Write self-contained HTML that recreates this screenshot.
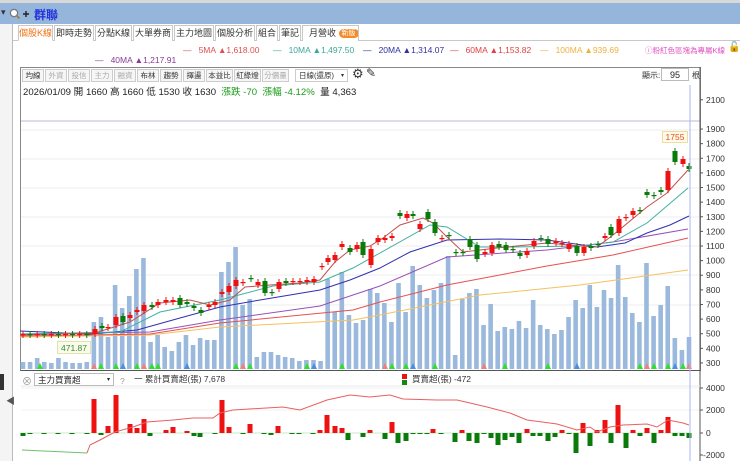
<!DOCTYPE html>
<html><head><meta charset="utf-8">
<style>
*{margin:0;padding:0;box-sizing:border-box}
body{width:740px;height:461px;overflow:hidden;background:#fff;font-family:"Liberation Sans","Noto Sans CJK TC",sans-serif;position:relative;color:#222}
.a{position:absolute;white-space:nowrap}
.tab{position:absolute;top:25px;height:16px;font-size:9px;line-height:15px;border:1px solid #c8c8c8;border-bottom:none;background:#fff;text-align:center;color:#333;white-space:nowrap;overflow:hidden}
.tb{position:absolute;top:69px;height:13px;font-size:7.5px;line-height:12px;border:1px solid #ccc;background:#f6f6f6;text-align:center;color:#333;white-space:nowrap;overflow:hidden}
.tb.d{color:#aaa}
</style></head><body>
<div class="a" style="left:0;top:0;width:740px;height:3px;background:#d8d8d8"></div>
<div class="a" style="left:0;top:3px;width:740px;height:21px;background:#95b5da"></div>
<div class="a" style="left:1px;top:7px;font-size:9px;color:#333">▾</div>
<svg class="a" style="left:9px;top:8px" width="22" height="12"><circle cx="5" cy="5" r="3.6" fill="#fff" stroke="#777" stroke-width="1.2"/><line x1="7.5" y1="7.5" x2="10.5" y2="10.5" stroke="#a08040" stroke-width="1.8"/><path d="M14 6h6M17 3v6" stroke="#222" stroke-width="1.4"/></svg>
<div class="a" style="left:34px;top:6px;font-size:12px;font-weight:bold;color:#2233dd">群聯</div>
<div class="a" style="left:0;top:24px;width:13px;height:437px;background:#f4f4f4;border-right:1px solid #bbb"></div>
<div class="a" style="left:0;top:374px;width:4px;height:16px;background:#333"></div>
<div class="a" style="left:6px;top:394px;font-size:9px;color:#555">◀</div>
<div class="a" style="left:13px;top:40px;width:727px;height:1px;background:#c8c8c8"></div>
<div class="tab" style="left:18px;width:35px;color:#f07010;border-bottom:1px solid #fff">個股K線</div>
<div class="tab" style="left:54px;width:40px">即時走勢</div>
<div class="tab" style="left:95px;width:37px">分點K線</div>
<div class="tab" style="left:133px;width:40px">大單券商</div>
<div class="tab" style="left:174px;width:40px">主力地圖</div>
<div class="tab" style="left:215px;width:40px">個股分析</div>
<div class="tab" style="left:256px;width:22px">組合</div>
<div class="tab" style="left:279px;width:22px">筆記</div>
<div class="tab" style="left:302px;width:57px;text-align:left;padding-left:6px">月營收 <span style="display:inline-block;background:#f58a2a;color:#fff;border-radius:6px;font-size:7px;line-height:9px;padding:0 3px;vertical-align:1px">新版</span></div>
<div class="a" style="left:183px;top:45px;font-size:8.5px;color:#e05050">—&nbsp;&nbsp; 5MA ▲1,618.00</div>
<div class="a" style="left:273px;top:45px;font-size:8.5px;color:#3aa89a">—&nbsp;&nbsp; 10MA ▲1,497.50</div>
<div class="a" style="left:363px;top:45px;font-size:8.5px;color:#3030a0">—&nbsp;&nbsp; 20MA ▲1,314.07</div>
<div class="a" style="left:450px;top:45px;font-size:8.5px;color:#e04040">—&nbsp;&nbsp; 60MA ▲1,153.82</div>
<div class="a" style="left:540px;top:45px;font-size:8.5px;color:#f0b040">—&nbsp;&nbsp; 100MA ▲939.69</div>
<div class="a" style="left:645px;top:45px;font-size:7.5px;color:#e050c0">ⓘ粉紅色區塊為專屬K線</div>
<div class="a" style="left:728px;top:42px;font-size:10px;color:#111">🔓</div>
<div class="a" style="left:95px;top:55px;font-size:8.5px;color:#8a3a9a">—&nbsp;&nbsp; 40MA ▲1,217.91</div>
<div class="a" style="left:20px;top:67px;width:681px;height:304px;border:1px solid #888;border-bottom:1px solid #555"></div>
<div class="tb" style="left:22px;width:22px">均線</div>
<div class="tb d" style="left:45px;width:22px">外資</div>
<div class="tb d" style="left:68px;width:22px">投信</div>
<div class="tb d" style="left:91px;width:22px">主力</div>
<div class="tb d" style="left:114px;width:22px">融資</div>
<div class="tb" style="left:137px;width:22px">布林</div>
<div class="tb" style="left:160px;width:22px">趨勢</div>
<div class="tb" style="left:183px;width:22px">擇盪</div>
<div class="tb" style="left:206px;width:27px">本益比</div>
<div class="tb" style="left:234px;width:27px">紅綠燈</div>
<div class="tb d" style="left:262px;width:27px">分價量</div>
<div class="tb" style="left:295px;width:53px;background:#fff;text-align:left;padding-left:3px">日線(還原)<span style="float:right;margin-right:3px;font-size:6px">▾</span></div>
<div class="a" style="left:352px;top:66px;font-size:13px;color:#333">⚙</div>
<div class="a" style="left:366px;top:66px;font-size:12px;color:#333">✎</div>
<div class="a" style="left:642px;top:70px;font-size:8px;color:#333">顯示:</div>
<div class="a" style="left:661px;top:68px;width:28px;height:13px;border:1px solid #bbb;font-size:9px;text-align:center;line-height:12px">95</div>
<div class="a" style="left:692px;top:70px;font-size:8px;color:#333">根</div>
<div class="a" style="left:23px;top:84px;font-size:9.6px;color:#222">2026/01/09 開 1660 高 1660 低 1530 收 1630 &nbsp;<span style="color:#1a9a1a">漲跌 -70 &nbsp;漲幅 -4.12%</span> &nbsp;量 4,363</div>
<svg class="a" style="left:0;top:0" width="740" height="461" id="s"></svg>
<div class="a" style="left:662px;top:131px;width:26px;height:12px;background:#fffbe8;border:1px solid #eedca0;font-size:8.5px;color:#e05020;text-align:center;line-height:11px">1755</div>
<div class="a" style="left:57px;top:341px;width:34px;height:13px;background:#fafbe8;border:1px solid #dde4b0;font-size:8.5px;color:#3a8a3a;text-align:center;line-height:12px">471.87</div>
<div class="a" style="left:22px;top:373px;font-size:10px;color:#999">⊗</div>
<div class="a" style="left:34px;top:373px;width:80px;height:13px;border:1px solid #bbb;background:#fff;font-size:8.5px;line-height:12px;padding-left:3px">主力買賣超<span style="float:right;margin-right:3px;font-size:6px">▾</span></div>
<div class="a" style="left:120px;top:376px;font-size:8.5px;color:#999">?</div>
<div class="a" style="left:134px;top:373px;font-size:8.5px;color:#333">一 累計買賣超(張) 7,678</div>
<div class="a" style="left:402px;top:374px;width:5px;height:5px;background:#e11"></div>
<div class="a" style="left:402px;top:380px;width:5px;height:5px;background:#181"></div>
<div class="a" style="left:412px;top:373px;font-size:8.5px;color:#333">買賣超(張) -472</div>
<script>
var s=document.getElementById('s'),h='';
function L(x1,y1,x2,y2,c,w){h+='<line x1="'+x1+'" y1="'+y1+'" x2="'+x2+'" y2="'+y2+'" stroke="'+c+'" stroke-width="'+(w||1)+'"/>';}
function R(x,y,w,hh,c){h+='<rect x="'+x+'" y="'+y+'" width="'+w+'" height="'+hh+'" fill="'+c+'"/>';}
function T(x,y,t){h+='<text x="'+x+'" y="'+y+'" font-size="8.5" fill="#333" font-family="Liberation Sans,sans-serif">'+t+'</text>';}
function P(p,c,w){h+='<polyline fill="none" stroke="'+c+'" stroke-width="'+(w||1)+'" points="'+p.map(function(a){return a.join(',')}).join(' ')+'"/>';}
L(21,121,700,121,'#dcdcec',2);
[130,159,188,217,246,275,305].forEach(function(y){L(21,y,700,y,'#eeeeee')});
L(21,410,700,410,'#f0f0f0');L(21,388,700,388,'#f0f0f0');
L(700,67,700,461,'#555');
L(21,386,700,386,'#e8e8e8');
for(var p=300;p<=2100;p+=100){if(p==2000)continue;var y=99.8+(2100-p)*0.1462;L(700,y,703,y,'#555');T(706,y+3,p);}
[[4000,388],[2000,410],[0,433],[-2000,455]].forEach(function(a){L(700,a[1],703,a[1],'#555');T(a[0]<0?703:706,a[1]+3,a[0]);});
var vt=[362,362,358,362,363,358,362,363,363,362,322,317,337,285,308,296,269,258,342,335,347,351,342,335,345,338,340,340,272,262,247,305,299,357,352,352,355,357,358,361,360,360,361,279,312,272,315,323,320,289,293,303,322,283,312,266,285,298,290,283,256,355,299,293,289,325,304,331,327,329,321,328,300,325,329,334,330,317,300,308,285,307,290,298,265,297,313,322,263,316,305,286,338,350,337];
var n=vt.length;
function X(i){return 23+i*(689-23)/(n-1);}
for(var i=0;i<n;i++){R(X(i)-2.3,vt[i],4.6,369-vt[i],'#9ab9dc');}
[40,94,101,116,123,137,144,152,158,187,236,243,250,307,314,342,385,392,406,413,435,484,505,548,577,640,647,654,668,675,683,689].forEach(function(x,k){var c=['#2ee02e','#f08080','#2ee02e','#2ee02e','#4a90e0'][k%5];h+='<polygon points="'+(x-3)+',369 '+(x+3)+',369 '+x+',363" fill="'+c+'"/>';});
P([[20,337],[150,335],[220,327],[353,320],[380,315],[480,295],[580,285],[688,270]],'#f5c060');
P([[20,336],[150,334],[220,323],[353,310],[380,302],[447,285],[547,266],[613,255],[688,238]],'#e85050');
P([[20,334],[150,332],[220,320],[320,306],[380,286],[447,257],[547,250],[613,242],[688,229]],'#9a50b8');
P([[20,331],[90,334],[137,330],[180,318],[220,307],[260,300],[320,290],[350,280],[380,268],[410,252],[447,240],[500,239],[547,240],[597,247],[625,243],[647,233],[670,225],[689,216]],'#3030b0');
P([[20,334],[120,332],[160,312],[220,300],[273,286],[320,282],[353,268],[380,253],[430,225],[447,227],[480,247],[513,247],[580,246],[613,242],[647,223],[688,188]],'#40b0a0');
P([[20,335],[95,333],[130,322],[160,303],[190,300],[210,305],[230,300],[245,287],[270,285],[300,283],[320,280],[335,262],[350,250],[370,246],[383,238],[400,225],[423,218],[433,223],[447,237],[463,252],[497,248],[547,243],[580,246],[597,247],[613,235],[647,207],[667,193],[688,170]],'#c05050');
var C=[[95,329,334,'r'],[102,326,328,'g'],[108,327,328,'r'],[116,317,325,'r'],[123,316,322,'g'],[130,315,318,'r'],[137,310,312,'r'],[144,305,311,'r'],[152,305,307,'g'],[158,302,305,'r'],[166,300,302,'r'],[173,300,302,'r'],[180,298,305,'g'],[187,302,304,'g'],[194,306,308,'g'],[201,310,313,'g'],[209,305,307,'r'],[215,302,305,'r'],[222,292,294,'r'],[229,286,292,'r'],[236,280,286,'r'],[243,282,283,'r'],[251,278,279,'g'],[258,282,285,'r'],[265,281,293,'g'],[272,292,293,'g'],[279,282,289,'r'],[286,281,283,'g'],[293,281,282,'r'],[300,281,282,'r'],[307,280,282,'r'],[314,279,282,'r'],[322,266,267,'r'],[328,258,262,'r'],[335,255,260,'r'],[342,244,247,'r'],[350,248,252,'g'],[357,245,249,'r'],[363,242,255,'g'],[371,249,265,'r'],[378,238,242,'r'],[385,238,240,'r'],[392,236,238,'r'],[400,213,216,'g'],[407,214,218,'r'],[413,214,216,'g'],[420,224,229,'r'],[428,212,219,'g'],[435,222,233,'g'],[442,238,239,'r'],[449,235,236,'g'],[456,252,253,'g'],[463,252,253,'g'],[470,239,247,'g'],[477,245,259,'g'],[485,252,254,'r'],[492,245,253,'r'],[499,244,247,'g'],[506,245,250,'g'],[513,249,250,'g'],[520,253,256,'g'],[527,251,255,'r'],[534,241,246,'r'],[541,238,239,'g'],[548,239,244,'g'],[556,241,243,'r'],[562,243,244,'r'],[569,244,249,'r'],[577,246,253,'g'],[584,247,253,'r'],[591,246,248,'g'],[598,244,245,'g'],[605,236,238,'r'],[611,227,235,'g'],[619,219,233,'r'],[626,217,218,'r'],[633,211,215,'r'],[640,210,211,'g'],[647,192,195,'g'],[654,195,196,'g'],[661,190,192,'g'],[668,171,190,'r'],[675,151,162,'g'],[683,159,164,'r'],[689,166,169,'g']];
for(var i=0;i<10;i++)C.push([X(i),334,335,i%2?'g':'r']);
C.forEach(function(c){var col=c[3]=='r'?'#ee1111':'#0a7a0a';L(c[0],c[1]-3,c[0],c[2]+3,col);R(c[0]-2.5,c[1],5,Math.max(1.2,c[2]-c[1]),col);});
L(21,433,690,433,'#cde8cd');
var B=[[94,399],[108,426],[116,395],[130,424],[137,428],[144,419],[166,430],[173,427],[187,431],[222,400],[229,427],[250,424],[278,426],[320,430],[327,415],[335,426],[342,428],[370,430],[392,422],[433,429],[462,430],[527,429],[562,430],[583,423],[597,430],[605,420],[618,405],[633,430],[647,428],[661,430],[668,417]];
B.forEach(function(b){R(b[0]-2.5,b[1],5,433-b[1],'#ee1111');});
var G=[[23,436],[30,434],[44,434],[58,434],[72,434],[87,434],[101,435],[150,436],[194,436],[200,437],[215,434],[243,434],[264,434],[271,435],[292,434],[299,434],[313,434],[348,440],[363,437],[385,439],[398,443],[406,441],[413,434],[420,434],[427,434],[441,434],[455,442],[469,441],[477,443],[484,434],[491,438],[498,445],[505,440],[512,437],[519,443],[533,436],[540,436],[548,441],[555,437],[569,434],[576,453],[590,446],[611,443],[626,448],[640,436],[654,443],[675,436],[682,436],[689,438]];
G.forEach(function(b){R(b[0]-2.5,433,5,b[1]-433,'#0a7a0a');});
P([[22,450],[87,453]],'#6cc06c');
P([[87,453],[90,445],[100,440],[115,432],[133,427],[147,422],[173,420],[193,418],[213,418],[220,413],[233,410],[283,407],[300,410],[327,400],[350,395],[370,397],[390,395],[403,399],[437,400],[457,400],[470,403],[487,407],[510,413],[527,420],[557,424],[577,430],[590,427],[597,432],[610,427],[623,425],[647,424],[657,427],[668,420],[683,423],[689,425]],'#e86060');
L(690,85,690,461,'#aab4f0');
s.innerHTML=h;
</script>
</body></html>
